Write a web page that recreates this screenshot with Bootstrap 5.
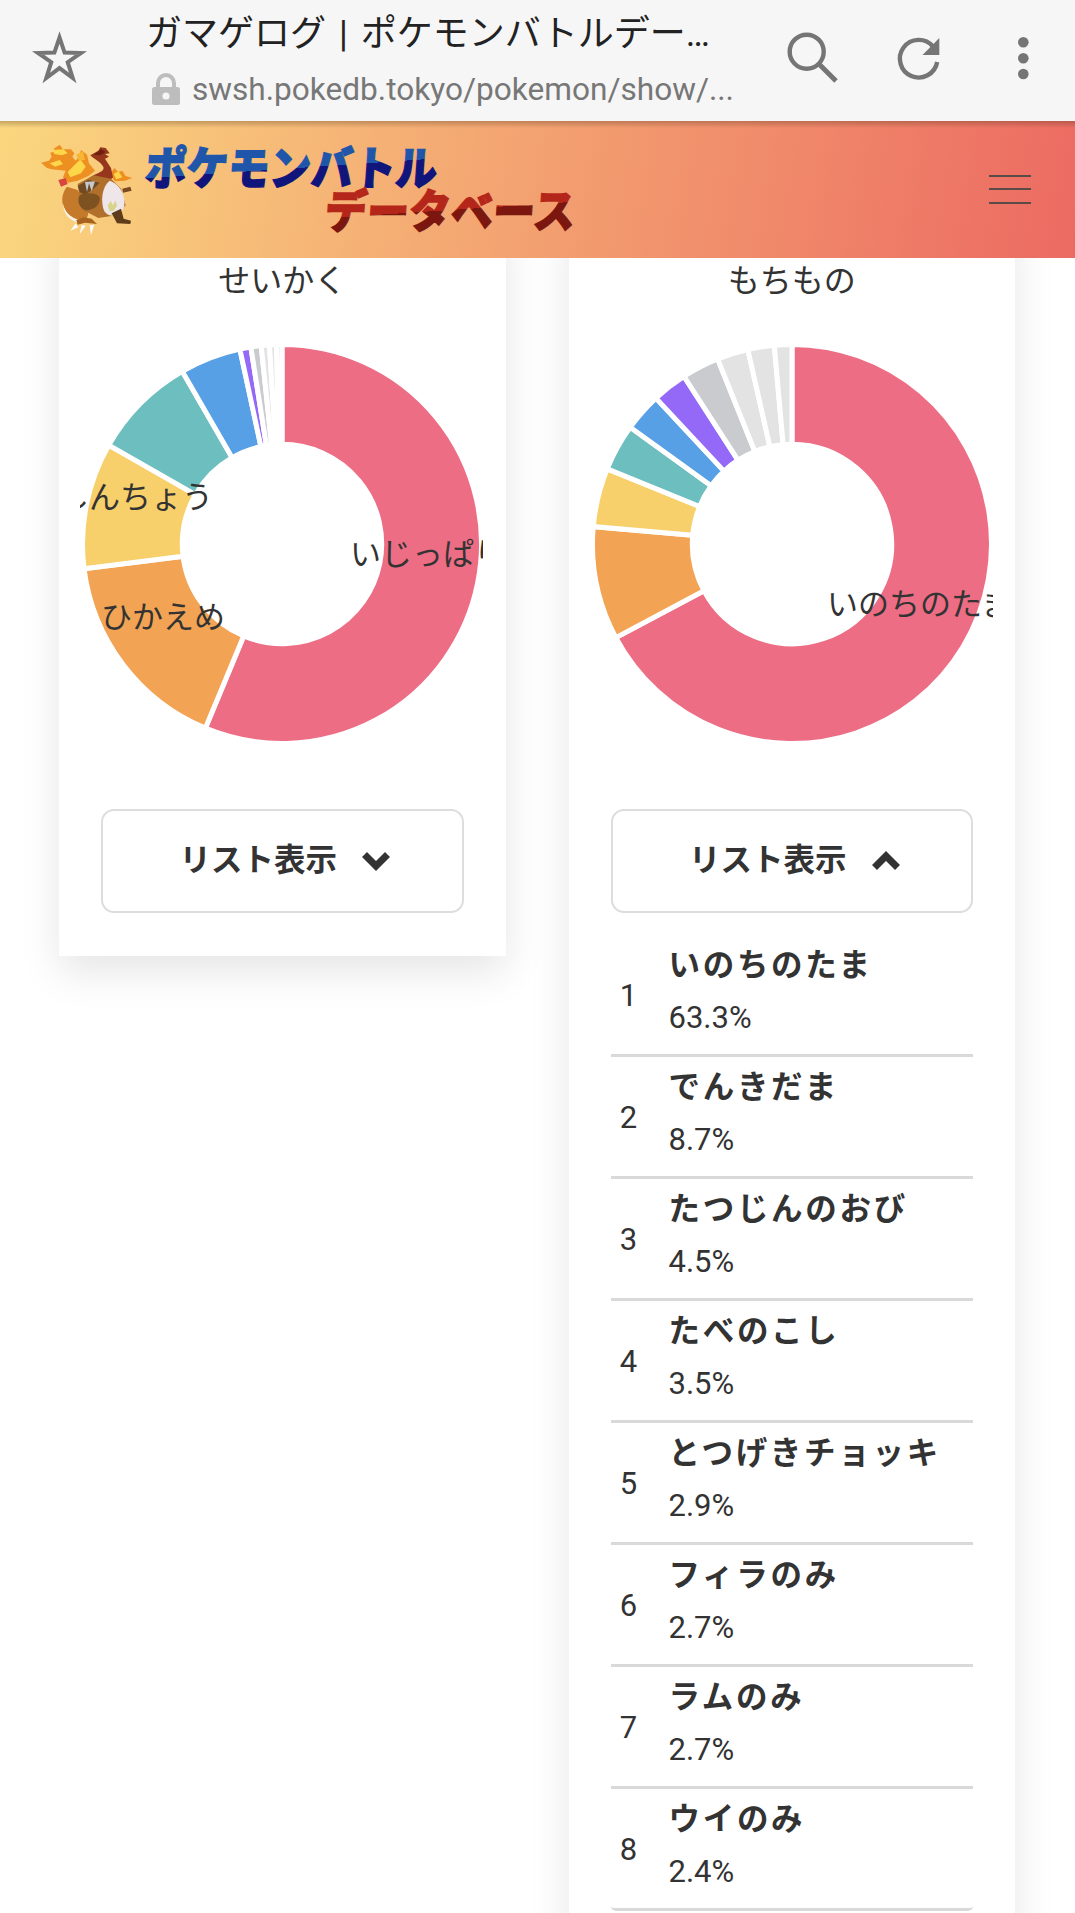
<!DOCTYPE html>
<html lang="ja">
<head>
<meta charset="utf-8">
<title>ガマゲログ | ポケモンバトルデータベース</title>
<link rel="stylesheet" href="https://cdn.jsdelivr.net/npm/bootstrap@5.3.0/dist/css/bootstrap.min.css">
<style>
html,body{height:1913px;overflow:hidden}
body{font-family:Roboto,"Noto Sans CJK JP",sans-serif;color:#333;background:#fff;font-size:31px}
.chrome-bar{height:121px;background:#f6f6f6;padding-top:28px;position:relative;z-index:3}
.chrome-star{margin-left:29px}
.chrome-text{margin-left:57px;width:600px;margin-top:-16px}
.chrome-title{font-size:36px;line-height:44px;color:#222;white-space:nowrap;word-spacing:4px}
.chrome-url{font-size:31.6px;line-height:40px;color:#777;white-space:nowrap;margin-top:14px}
.chrome-url svg{margin:0 11px 0 5px}
.ic-search{margin-left:36px}.ic-reload{margin-left:46px}.ic-dots{margin-left:45px}
.site-head{height:137px;padding:0;position:relative;z-index:2;flex-wrap:nowrap;
 background:linear-gradient(to bottom,rgba(60,40,20,.28),rgba(60,40,20,0) 7px),linear-gradient(100deg,#fad77f,#ec6a62)}
.burger{width:42px;margin-right:44px;margin-top:-1px;border:0;background:none;padding:0}
.burger i{display:block;height:2px;background:#5a4a48;margin-bottom:11.5px}
.burger i:last-child{margin-bottom:0}
.stat-page{margin-top:-40px;padding-left:59px;padding-right:60px}
.stat-row-wrap{--bs-gutter-x:63px;--bs-gutter-y:0;align-items:flex-start}
.stat-card{padding:40px 42px 43px;box-shadow:0 16px 38px rgba(0,0,0,.1);--bs-card-bg:#fff}
.stat-title{font-size:32px;line-height:46px;text-align:center;margin:0;font-weight:400;color:#333}
.donut{display:block;margin:36px -21px 61px;width:403px;height:408px}
.donut text{font-size:31px;fill:#333;font-family:Roboto,"Noto Sans CJK JP",sans-serif}
.list-toggle{height:104px;padding-left:18px;--bs-btn-border-width:2.6px;--bs-btn-border-color:#ddd;--bs-btn-border-radius:13px;--bs-btn-font-size:31.5px;--bs-btn-font-weight:700;--bs-btn-color:#333;--bs-btn-line-height:1.2}
.list-toggle svg{margin-left:24px}
.stat-list{margin-top:22px;--bs-list-group-border-width:3px;--bs-list-group-border-color:#d9d9d9;--bs-list-group-color:#333}
.list-group-flush>.stat-item,.list-group-flush>.stat-item:last-child{height:122.05px;padding:0;border-bottom-width:3px;align-items:center}
.stat-rank{width:36px;text-align:center;margin-right:22px;font-size:31px;line-height:1;padding-top:1px}
.stat-body{padding-bottom:5px}
.stat-name{font-weight:700;font-size:31.5px;line-height:40px;margin-bottom:11px;letter-spacing:2.7px}
.stat-pct{line-height:40px;padding-top:1px}
.logo-mon{filter:blur(.35px)}
</style>
</head>
<body>
<div class="chrome-bar d-flex align-items-start">
  <svg class="chrome-star flex-shrink-0" width="60" height="60" viewBox="0 0 60 60"><polygon points="30.5,9.5 35.6,24.6 51.9,25 38.7,34.2 43.7,50 30.5,40.1 17.3,50 22.3,34.2 9.1,25 25.4,24.6" fill="none" stroke="#757575" stroke-width="4"/></svg>
  <div class="chrome-text flex-shrink-0">
    <div class="chrome-title">ガマゲログ | ポケモンバトルデー…</div>
    <div class="chrome-url d-flex align-items-center">
      <svg width="30" height="34" viewBox="0 0 30 34"><path d="M7 15V10a8 8 0 0 1 16 0v5" fill="none" stroke="#bdbdbd" stroke-width="4"/><rect x="1" y="14" width="28" height="18" rx="2.5" fill="#bdbdbd"/><circle cx="15" cy="23" r="3.6" fill="#f6f6f6"/></svg>
      <span>swsh.pokedb.tokyo/pokemon/show/...</span>
    </div>
  </div>
  <svg class="ic-search flex-shrink-0" width="60" height="60" viewBox="782 28 60 60"><circle cx="806.7" cy="51.7" r="17" fill="none" stroke="#757575" stroke-width="4.4"/><path d="M819 64l17 17" stroke="#757575" stroke-width="5" fill="none"/></svg>
  <svg class="ic-reload flex-shrink-0" width="60" height="60" viewBox="888 28 60 60"><path d="M933 46.5A18.8 18.8 0 1 0 937.2 62" fill="none" stroke="#757575" stroke-width="4.4"/><polygon points="939.3,38 939.3,55 922.5,55" fill="#757575"/></svg>
  <svg class="ic-dots flex-shrink-0" width="60" height="60" viewBox="993 28 60 60"><circle cx="1023.3" cy="42.3" r="5.3" fill="#757575"/><circle cx="1023.3" cy="58.3" r="5.3" fill="#757575"/><circle cx="1023.3" cy="74" r="5.3" fill="#757575"/></svg>
</div>

<nav class="navbar site-head">
  <a class="navbar-brand p-0 m-0" href="#">
    <svg class="d-block" width="600" height="137" viewBox="0 121 600 137" role="img" aria-label="ポケモンバトルデータベース">
      <defs>
        <linearGradient id="gBlue" gradientUnits="userSpaceOnUse" x1="144" y1="-31" x2="146" y2="-2">
          <stop offset="0.5" stop-color="#1f56aa"/><stop offset="0.5" stop-color="#10157c"/>
        </linearGradient>
        <linearGradient id="gRed" gradientUnits="userSpaceOnUse" x1="124" y1="-33" x2="126" y2="-3">
          <stop offset="0.5" stop-color="#b5261a"/><stop offset="0.5" stop-color="#7c1710"/>
        </linearGradient>
      </defs>
      <text transform="translate(144,185) skewX(-4)" textLength="292" lengthAdjust="spacingAndGlyphs" fill="url(#gBlue)" stroke="url(#gBlue)" stroke-width="1.4" font-family="'Noto Sans CJK JP',sans-serif" font-weight="900" font-size="46">ポケモンバトル</text>
      <text transform="translate(324,228) skewX(-4)" textLength="250" lengthAdjust="spacingAndGlyphs" fill="url(#gRed)" stroke="url(#gRed)" stroke-width="1.4" font-family="'Noto Sans CJK JP',sans-serif" font-weight="900" font-size="46">データベース</text>
      <g class="logo-mon" transform="translate(35,140) scale(.3333)">
        <path d="M96 140C70 172 80 218 122 236L152 244 160 222 150 190 128 150Z" fill="#c47a2a"/>
        <path d="M84 190C90 222 112 240 150 244L136 250C104 244 84 222 84 190Z" fill="#f8f2ea"/>
        <path d="M18 68L42 62 50 50 46 38 62 34 56 26 74 14 84 28 108 28 118 40 112 50 122 62 132 50 138 30 156 44 162 70 180 92 160 108 128 122 100 128 84 112 92 92 70 90 50 88 36 84Z" fill="#ee8f22"/>
        <path d="M52 30L86 28 98 40 80 46 58 42ZM44 70L74 60 84 72 60 80ZM112 82L136 58 152 80 138 100 106 112 98 96Z" fill="#fdd64a"/>
        <path d="M124 44L144 34 150 60 132 62Z" fill="#f7b535"/>
        <path d="M224 104L238 84 250 96 262 92 272 108 292 114 270 122 240 124Z" fill="#ee8f22"/>
        <path d="M236 102L250 94 262 112 244 118Z" fill="#fdd64a"/>
        <path d="M70 120L92 114 98 132 78 140Z" fill="#d8453c"/>
        <path d="M160 118C176 100 206 98 206 84 204 70 180 60 166 46L190 32 196 22 212 24 224 40 210 42 222 50 210 56 228 84 234 112 212 132Z" fill="#96361c"/>
        <path d="M176 44L198 28 212 36 196 46Z" fill="#6e1f10"/>
        <path d="M128 132L176 106 228 116 258 146 272 196 244 226 190 234 140 208Z" fill="#b0702c"/>
        <path d="M224 122C254 132 276 170 266 204 256 230 224 236 208 214 196 186 200 140 224 122Z" fill="#efe6ea"/>
        <path d="M218 196l10-14 4 14 10-14 4 16-10 14-12 2zM226 224l14-10 8 4-10 12z" fill="#d8d48a"/>
        <path d="M128 138L160 120 194 128 176 146 150 164 134 156Z" fill="#6f4a22"/>
        <path d="M134 166C150 156 186 158 194 172 198 196 172 214 150 210 130 202 126 180 134 166Z" fill="#7d5220"/>
        <path d="M150 126l6 30 6-26 8 24 10-30z" fill="#c5c9d0"/>
        <path d="M262 146l24-6 4 12-26 6z" fill="#7a4a22"/>
        <path d="M124 240L146 232 170 236 186 252 150 248 128 254Z" fill="#a8641f"/>
        <path d="M230 220L258 206 266 236 288 242 286 252 246 250Z" fill="#5e3c1a"/>
        <path d="M106 272L122 250 130 262ZM134 282L140 254 152 258ZM168 286L164 256 178 254Z" fill="#fdfaf4"/>
      </g>
    </svg>
  </a>
  <button class="burger" type="button" aria-label="メニュー"><i></i><i></i><i></i></button>
</nav>

<main class="stat-page">
  <div class="row stat-row-wrap">
    <div class="col-6">
      <section class="card border-0 rounded-0 stat-card">
        <h2 class="stat-title">せいかく</h2>
        <svg class="donut" viewBox="0 0 403 408" data-ends="202.6,262.9,299.7,330,347.8,351,354,356.4,358.4,360">
          <text x="270" y="225">いじっぱり</text>
          <text x="21" y="288">ひかえめ</text>
          <text x="133" y="168" text-anchor="end">しんちょう</text>
        </svg>
        <button class="btn list-toggle w-100 d-flex align-items-center justify-content-center" type="button">リスト表示
          <svg width="30" height="22" viewBox="0 0 30 22"><path d="M3.5 4.5L15 16 26.500 4.500" fill="none" stroke="#333" stroke-width="7"/></svg>
        </button>
      </section>
    </div>
    <div class="col-6">
      <section class="card border-0 rounded-0 stat-card">
        <h2 class="stat-title">もちもの</h2>
        <svg class="donut" viewBox="0 0 403 408" data-ends="242,275,292.1,305.8,317,327.2,338.1,347.2,354.9,360">
          <text x="237" y="275">いのちのたま</text>
        </svg>
        <button class="btn list-toggle w-100 d-flex align-items-center justify-content-center" type="button">リスト表示
          <svg width="30" height="22" viewBox="0 0 30 22"><path d="M3.5 17.500L15 6 26.500 17.500" fill="none" stroke="#333" stroke-width="7"/></svg>
        </button>
        <ul class="list-group list-group-flush stat-list">
          <li class="list-group-item stat-item d-flex"><span class="stat-rank">1</span><div class="stat-body"><div class="stat-name">いのちのたま</div><div class="stat-pct">63.3%</div></div></li>
          <li class="list-group-item stat-item d-flex"><span class="stat-rank">2</span><div class="stat-body"><div class="stat-name">でんきだま</div><div class="stat-pct">8.7%</div></div></li>
          <li class="list-group-item stat-item d-flex"><span class="stat-rank">3</span><div class="stat-body"><div class="stat-name">たつじんのおび</div><div class="stat-pct">4.5%</div></div></li>
          <li class="list-group-item stat-item d-flex"><span class="stat-rank">4</span><div class="stat-body"><div class="stat-name">たべのこし</div><div class="stat-pct">3.5%</div></div></li>
          <li class="list-group-item stat-item d-flex"><span class="stat-rank">5</span><div class="stat-body"><div class="stat-name">とつげきチョッキ</div><div class="stat-pct">2.9%</div></div></li>
          <li class="list-group-item stat-item d-flex"><span class="stat-rank">6</span><div class="stat-body"><div class="stat-name">フィラのみ</div><div class="stat-pct">2.7%</div></div></li>
          <li class="list-group-item stat-item d-flex"><span class="stat-rank">7</span><div class="stat-body"><div class="stat-name">ラムのみ</div><div class="stat-pct">2.7%</div></div></li>
          <li class="list-group-item stat-item d-flex"><span class="stat-rank">8</span><div class="stat-body"><div class="stat-name">ウイのみ</div><div class="stat-pct">2.4%</div></div></li>
        </ul>
      </section>
    </div>
  </div>
</main>
<script src="https://cdn.jsdelivr.net/npm/bootstrap@5.3.0/dist/js/bootstrap.bundle.min.js"></script>
<script>
(function(){
  var colors=['#ed6d85','#f2a354','#f7d06b','#6cbebf','#57a0e5','#9469f7','#c9cbcf','#e3e3e3','#e3e3e3','#e3e3e3'];
  var cx=202,cy=204,R=199.5,r=99.7,NS='http://www.w3.org/2000/svg';
  function pt(rad,deg){var a=(deg-90)*Math.PI/180;return (cx+rad*Math.cos(a)).toFixed(2)+' '+(cy+rad*Math.sin(a)).toFixed(2);}
  document.querySelectorAll('.donut').forEach(function(svg){
    var first=svg.firstElementChild,start=0;
    svg.dataset.ends.split(',').map(Number).forEach(function(end,i){
      var large=end-start>180?1:0,p=document.createElementNS(NS,'path');
      p.setAttribute('d','M'+pt(R,start)+'A'+R+' '+R+' 0 '+large+' 1 '+pt(R,end)+'L'+pt(r,end)+'A'+r+' '+r+' 0 '+large+' 0 '+pt(r,start)+'Z');
      p.setAttribute('fill',colors[i]);p.setAttribute('stroke','#fff');p.setAttribute('stroke-width','5');
      svg.insertBefore(p,first);start=end;
    });
  });
})();
</script>
</body>
</html>
